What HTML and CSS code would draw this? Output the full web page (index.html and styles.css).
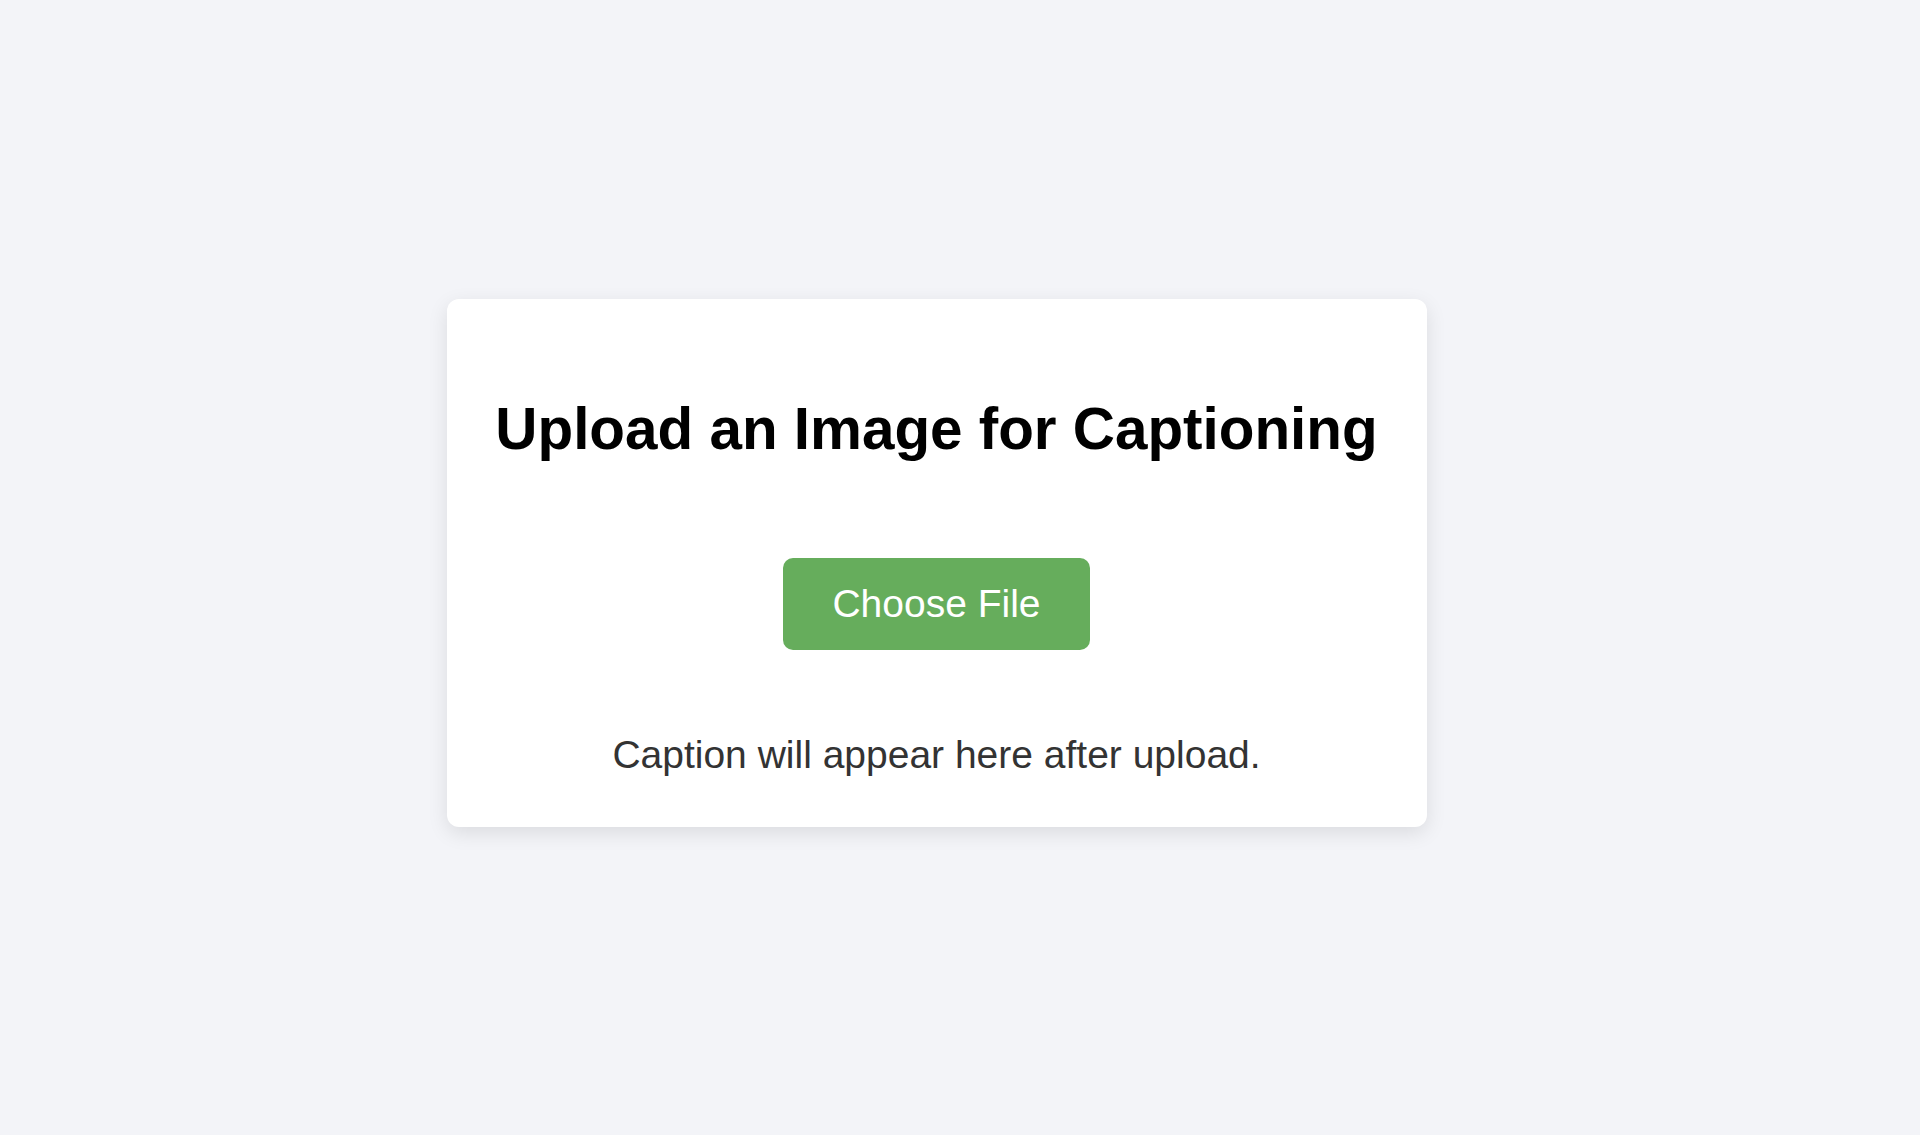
FILE: index.html
```html
<!DOCTYPE html>
<html lang="en">
<head>
<meta charset="utf-8">
<title>Image Captioning</title>
<link rel="stylesheet" href="styles.css">
</head>
<body>
<main class="page">
  <section class="card">
    <h1 class="title">Upload an Image for Captioning</h1>
    <label class="upload-btn">Choose File<input type="file" class="file-input" accept="image/*"></label>
    <p class="caption">Caption will appear here after upload.</p>
  </section>
</main>
</body>
</html>
```

FILE: styles.css
```css
html, body {
  margin: 0;
  padding: 0;
}
body {
  background: #f3f4f8;
  font-family: "Liberation Sans", Arial, Helvetica, sans-serif;
}
.page {
  min-height: 100vh;
  box-sizing: border-box;
  display: flex;
  align-items: center;
  justify-content: center;
  padding: 0 47px 10px 0;
}
.card {
  width: 980px;
  box-sizing: border-box;
  background: #ffffff;
  border-radius: 12px;
  box-shadow: 0 6px 20px rgba(0, 0, 0, 0.10);
  padding: 95px 40px 49px;
  display: flex;
  flex-direction: column;
  align-items: center;
  text-align: center;
}
.title {
  margin: 0;
  font-size: 58.4px;
  line-height: 70px;
  font-weight: 700;
  color: #000;
  white-space: nowrap;
}
.upload-btn {
  margin-top: 94px;
  display: inline-block;
  height: 92px;
  line-height: 92px;
  padding: 0 49px;
  background: #66ad5c;
  color: #fff;
  font-size: 39px;
  border-radius: 10px;
  cursor: pointer;
}
.file-input {
  display: none;
}
.caption {
  margin: 82px 0 0;
  font-size: 39px;
  line-height: 46px;
  color: #333;
}
```
